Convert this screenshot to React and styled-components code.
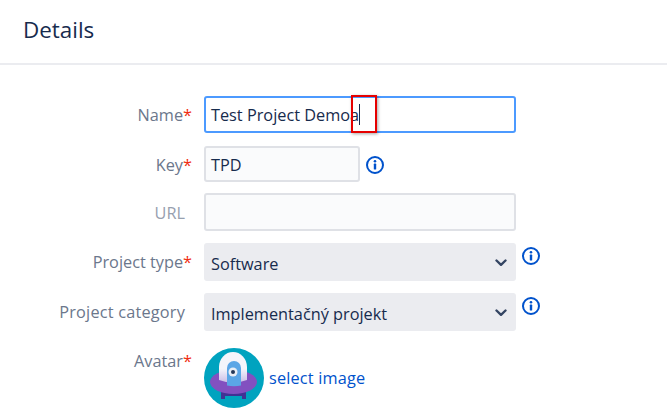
import React from 'react'
import styled, { createGlobalStyle } from 'styled-components'

const Global = createGlobalStyle`
  html, body { margin: 0; padding: 0; background: #fff; }
  body { font-family: "Open Sans", "Noto Sans", "Liberation Sans", sans-serif; overflow: hidden; }
`

function InfoIcon() {
  return (
    <svg width="20" height="20" viewBox="0 0 20 20" fill="none">
      <circle cx="10" cy="10" r="8" stroke="#0052cc" strokeWidth="2" />
      <circle cx="10" cy="6.2" r="1.3" fill="#0052cc" />
      <rect x="8.800" y="8.600" width="2.400" height="6" rx="0.6" fill="#0052cc" />
    </svg>
  )
}

function Chevron() {
  return (
    <svg width="12" height="8" viewBox="0 0 12 8" fill="none">
      <path d="M1.500 1.500 L6 5.800 L10.500 1.500" stroke="#344563" strokeWidth="2.400" strokeLinecap="round" strokeLinejoin="round" />
    </svg>
  )
}

function AvatarImage() {
  return (
    <svg width="60" height="60" viewBox="0 0 60 60">
      <defs>
        <linearGradient id="dome" x1="0" y1="0" x2="0" y2="1">
          <stop offset="0.55" stopColor="#f4f5fb" />
          <stop offset="1" stopColor="#cbbde6" />
        </linearGradient>
      </defs>
      <circle cx="30" cy="30" r="30" fill="#00a3bf" />
      <path d="M17 43 h4 v8 h-4 z M38 43 h4 v8 h-4 z" fill="#403294" />
      <rect x="17" y="44" width="25" height="4" fill="#403294" />
      <ellipse cx="29.500" cy="34" rx="23.500" ry="12" fill="#8250c0" />
      <path d="M15 19 a14 15 0 0 1 28 0 v13 q-14 5 -28 0 z" fill="url(#dome)" />
      <path d="M23 37.500 V20 a7 7 0 0 1 14 0 V37.500 q-7 1.500 -14 0 z" fill="#5ba6e6" />
      <circle cx="29" cy="24" r="4.500" fill="#e9eef5" />
      <circle cx="29" cy="24" r="2" fill="#253858" />
    </svg>
  )
}

export default function App() {
  return (
    <Page>
      <Global />
      <Header>Details</Header>
      <Form>
        <Row $height={37} $mb={13}>
          <Label>Name<Req>*</Req></Label>
          <NameField>
            <Value>Test Project Demoa</Value><Caret />
            <Highlight />
          </NameField>
        </Row>
        <Row $height={36} $mb={11}>
          <Label $top={2}>Key<Req>*</Req></Label>
          <Field $width={156}><Value $top={1}>TPD</Value></Field>
          <IconSlot><InfoIcon /></IconSlot>
        </Row>
        <Row $height={38} $mb={12}>
          <Label $muted $top={2}>URL</Label>
          <Field $width={312} />
        </Row>
        <Row $height={38} $mb={12}>
          <Label>Project type<Req>*</Req></Label>
          <Select><Value $top={1}>Software</Value><Chevron /></Select>
          <TopIconSlot><InfoIcon /></TopIconSlot>
        </Row>
        <Row $height={38} $mb={17}>
          <Label $bare>Project category</Label>
          <Select><Value $top={1}>Implementačný projekt</Value><Chevron /></Select>
          <TopIconSlot><InfoIcon /></TopIconSlot>
        </Row>
        <AvatarRow>
          <AvatarLabel>Avatar<Req>*</Req></AvatarLabel>
          <AvatarImage />
          <SelectLink>select image</SelectLink>
        </AvatarRow>
      </Form>
    </Page>
  )
}

const Page = styled.div`
  width: 667px;
  height: 414px;
  overflow: hidden;
  color: #172b4d;
`
const Header = styled.div`
  height: 50px;
  padding: 13px 0 0 23px;
  font-size: 22.4px;
  line-height: 34px;
  border-bottom: 2px solid #ebecf0;
`
const Form = styled.div`
  padding-top: 31px;
  display: flex;
  flex-direction: column;
`
const Row = styled.div`
  display: flex;
  align-items: center;
  height: ${p => p.$height}px;
  margin-bottom: ${p => p.$mb}px;
`
const Label = styled.div`
  width: 192px;
  margin-right: 12px;
  flex-shrink: 0;
  box-sizing: border-box;
  padding: ${p => p.$top || 0}px ${p => (p.$bare || p.$muted ? 7 : 0)}px 0 0;
  text-align: right;
  font-size: 16.3px;
  letter-spacing: ${p => (p.$bare ? 0.2 : 0)}px;
  color: ${p => (p.$muted ? '#97a0af' : '#6b778c')};
`
const Req = styled.span`
  color: #f02c10;
`
const Value = styled.span`
  font-size: 16.3px;
  position: relative;
  top: ${p => p.$top || 0}px;
`
const Field = styled.div`
  width: ${p => p.$width}px;
  height: 100%;
  box-sizing: border-box;
  display: flex;
  align-items: center;
  padding: 0 5px;
  background: #fafbfc;
  border: 2px solid #dfe1e6;
  border-radius: 3px;
`
const NameField = styled(Field)`
  position: relative;
  width: 312px;
  background: #fff;
  border-color: #4c9aff;
`
const Caret = styled.span`
  width: 1px;
  height: 21px;
  background: #172b4d;
`
const Highlight = styled.span`
  position: absolute;
  left: 145px;
  top: -3px;
  width: 22px;
  height: 34px;
  border: 2px solid #e60000;
  box-shadow: 1px 1px 3px rgba(0, 0, 0, 0.35);
`
const Select = styled.div`
  width: 312px;
  height: 100%;
  box-sizing: border-box;
  display: flex;
  align-items: center;
  justify-content: space-between;
  padding: 2px 9px 0 7px;
  background: #ebecf0;
  border-radius: 3px;
`
const IconSlot = styled.div`
  display: flex;
  margin-left: 5px;
  margin-top: 1px;
`
const TopIconSlot = styled(IconSlot)`
  align-self: flex-start;
  margin-left: 5px;
  margin-top: 3px;
`
const AvatarRow = styled.div`
  display: flex;
  align-items: center;
`
const AvatarLabel = styled(Label)`
  align-self: flex-start;
  padding-top: 2px;
`
const SelectLink = styled.a`
  margin-left: 5px;
  font-size: 16.3px;
  letter-spacing: 0.17px;
  color: #0052cc;
`
